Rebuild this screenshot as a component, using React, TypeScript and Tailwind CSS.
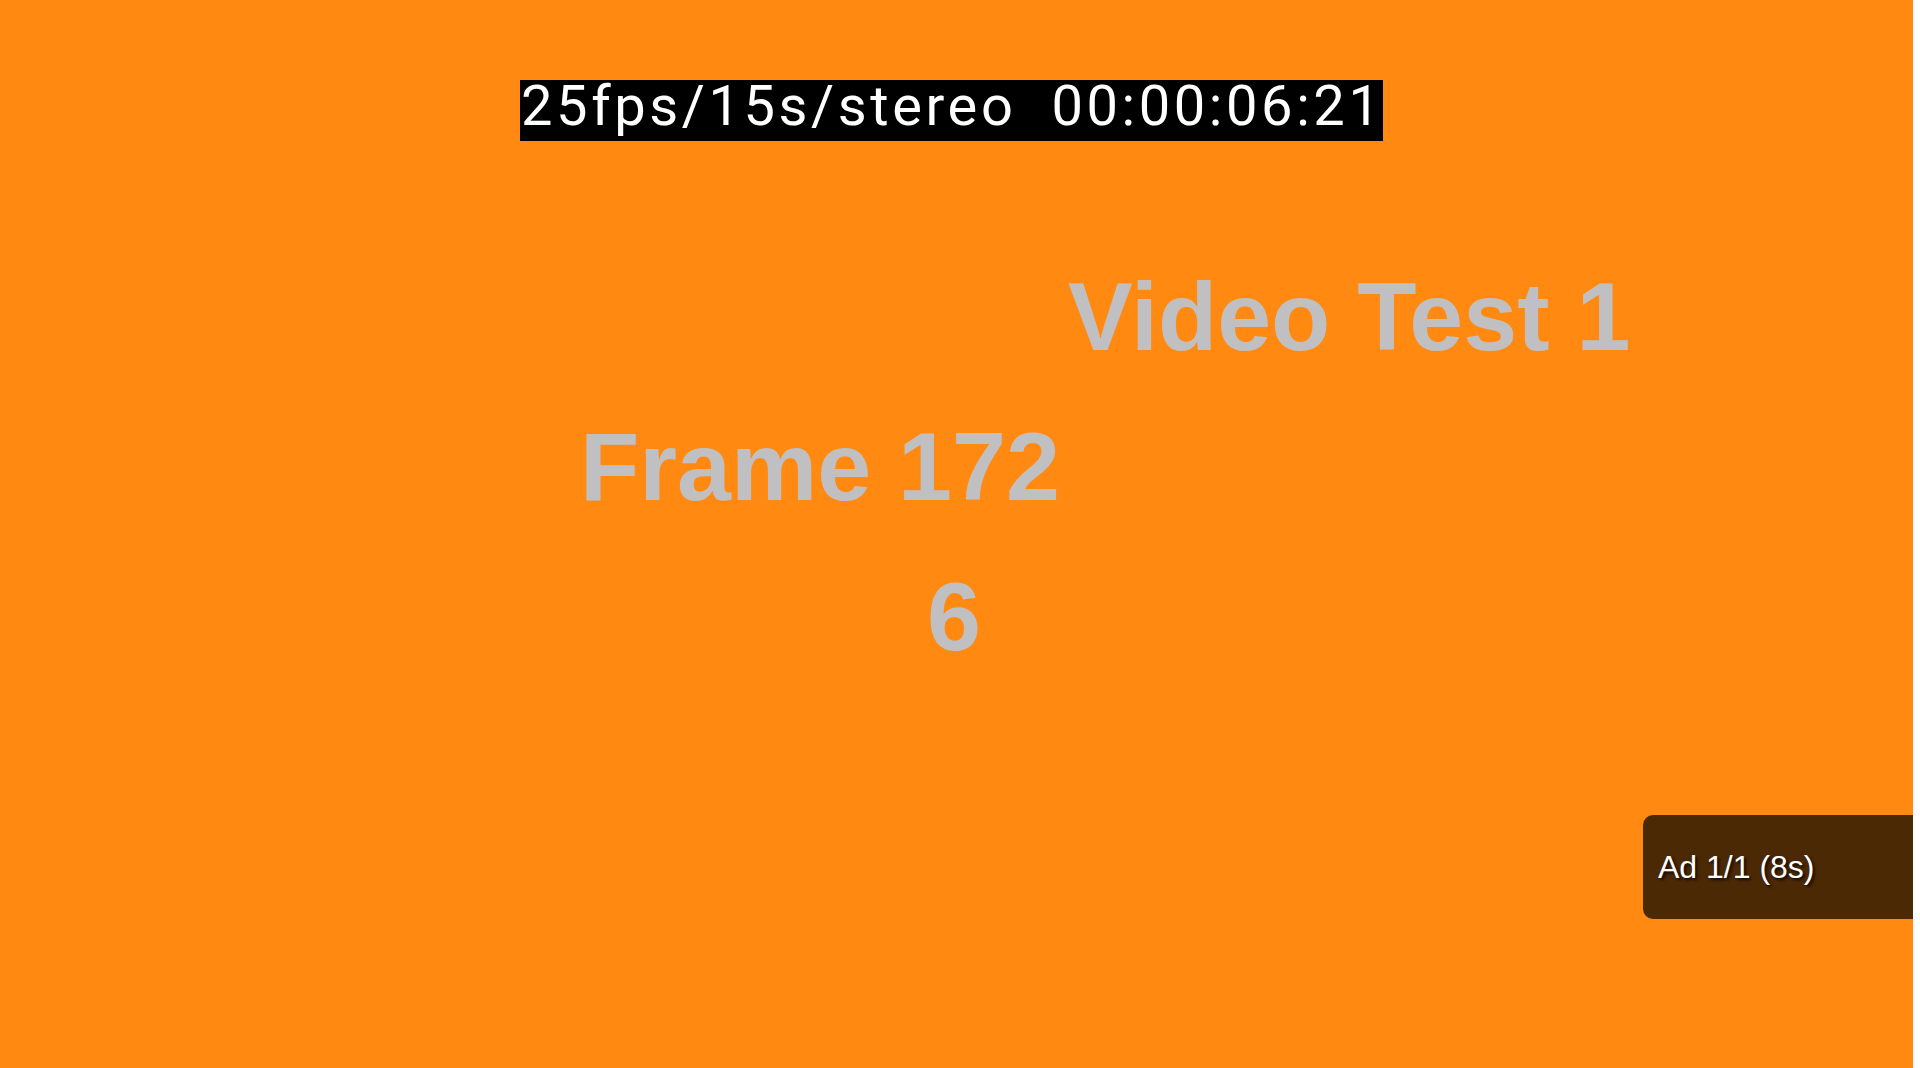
import React from "react";

export default function App() {
  return (
    <div className="w-[1920px] h-[1068px] bg-white flex overflow-hidden">
      <div className="relative w-[1913px] h-full bg-[#ff8911] flex flex-col">
        <div className="pt-[80px] pl-[520px]">
          <div
            className="w-[863px] h-[61px] bg-black text-white pl-[1px] text-[56px] leading-[52px] pb-[9px] tracking-[3.6px] whitespace-pre overflow-visible"
            style={{ fontFamily: "Roboto, 'Liberation Sans', sans-serif" }}
          >
            {"25fps/15s/stereo  00:00:06:21"}
          </div>
        </div>
        <div
          className="mt-[101px] flex flex-col text-[97px] leading-[150px] font-bold text-[#c0c0c2] whitespace-pre"
          style={{ fontFamily: "'Liberation Sans', Arial, sans-serif" }}
        >
          <div className="pl-[1068px]">Video Test 1</div>
          <div className="pl-[580px]">Frame 172</div>
          <div className="pl-[927px]">6</div>
        </div>
        <div
          className="absolute left-[1643px] top-[815px] w-[270px] h-[104px] bg-black/70 rounded-l-[10px] flex items-center pl-[15px] text-white text-[32px] [text-shadow:2px_2px_3px_rgba(0,0,0,0.8)]"
          style={{ fontFamily: "'Liberation Sans', Arial, sans-serif" }}
        >
          Ad 1/1 (8s)
        </div>
      </div>
    </div>
  );
}
